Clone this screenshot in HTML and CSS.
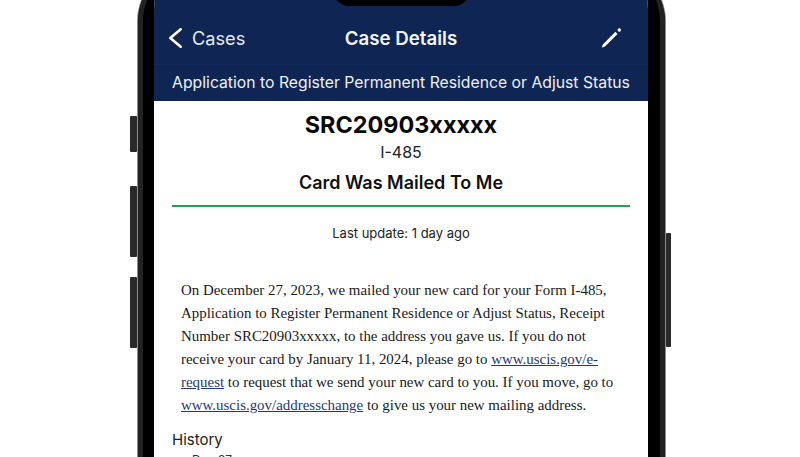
FILE: index.html
```html
<!DOCTYPE html>
<html lang="en">
<head>
<meta charset="utf-8">
<title>Case Details</title>
<link rel="stylesheet" href="styles.css">
</head>
<body>
<div class="phone">
  <span class="btn btn-silent"></span>
  <span class="btn btn-up"></span>
  <span class="btn btn-down"></span>
  <span class="btn btn-power"></span>
  <div class="bezel">
    <div class="screen">
      <span class="island"></span>
      <header class="head">
        <div class="nav">
          <div class="back">
            <svg class="chev" viewBox="0 0 16 24"><path d="M12.700 3.300 2.300 12 12.700 20.700"/></svg>
            <span>Cases</span>
          </div>
          <div class="title">Case Details</div>
          <svg class="pen" viewBox="0 0 22 22"><path class="p1" d="M1 20.500C1 18.800 1.700 17.500 2.800 16.400L14.400 4.800 16.500 6.900 5 18.500C3.900 19.600 2.700 20.400 1 20.500Z"/><circle class="p1" cx="18.300" cy="3" r="1.700"/></svg>
        </div>
        <div class="form-name">Application to Register Permanent Residence or Adjust Status</div>
      </header>
      <main class="body">
        <h1 class="receipt">SRC20903xxxxx</h1>
        <div class="form">I-485</div>
        <h2 class="status">Card Was Mailed To Me</h2>
        <div class="update">Last update: 1 day ago</div>
        <p class="desc">On December 27, 2023, we mailed your new card for your Form I-485,<br>Application to Register Permanent Residence or Adjust Status, Receipt<br>Number SRC20903xxxxx, to the address you gave us. If you do not<br>receive your card by January 11, 2024, please go to <a href="#">www.uscis.gov/e-<br>request</a> to request that we send your new card to you. If you move, go to<br><a href="#">www.uscis.gov/addresschange</a> to give us your new mailing address.</p>
        <div class="history">History</div>
        <div class="hist-item">Dec 27</div>
      </main>
    </div>
  </div>
</div>
</body>
</html>
```

FILE: styles.css
```css
html, body { margin: 0; padding: 0; height: 457px; overflow: hidden; background: #fff; }
body { font-family: "Inter", "Liberation Sans", sans-serif; color: #111; }

.phone {
  position: relative;
  box-sizing: border-box;
  width: 529px;
  height: 546px;
  margin: -40px 0 0 137px;
  padding: 1px;
  border-radius: 62px 62px 0 0;
  background: #8a8a8a;
}
.bezel {
  box-sizing: border-box;
  height: 100%;
  padding: 0 17px 0 16px;
  border-radius: 61px 61px 0 0;
  background: #000;
  box-shadow: inset 5px 0 0 #222, inset -5px 0 0 #222;
}
.screen {
  position: relative;
  height: 100%;
  overflow: hidden;
  border-radius: 48px 48px 0 0;
  background: #fff;
}
.island {
  position: absolute;
  top: 0;
  left: 179px;
  width: 137px;
  height: 45px;
  border-radius: 16px;
  background: #000;
}
.btn { position: absolute; width: 7px; background: #2a2a2a; border-radius: 1px; }
.btn-silent { left: -7px; top: 156px; height: 36px; }
.btn-up { left: -7px; top: 226px; height: 71px; }
.btn-down { left: -7px; top: 317px; height: 71px; }
.btn-power { right: -5px; top: 273px; width: 5px; height: 114px; }

.head { background: #0f2553; color: #fff; }
.nav {
  display: grid;
  grid-template-columns: 1fr auto 1fr;
  align-items: center;
  box-sizing: border-box;
  height: 103px;
  padding: 51px 14px 0;
}
.back { display: flex; align-items: center; gap: 8px; font-size: 18.200px; color: #e8ebf2; }
.chev { width: 16px; height: 24px; fill: none; stroke: #fff; stroke-width: 2.600; stroke-linecap: round; stroke-linejoin: round; }
.title { font-size: 18.700px; font-weight: 600; color: #f2f4f8; }
.pen { justify-self: end; width: 22px; height: 22px; margin-right: 11px; }
.p1 { fill: #fff; }
.form-name {
  height: 36px;
  line-height: 36px;
  text-align: center;
  font-size: 15.750px;
  color: #eef0f5;
  border-top: 1px solid #132a5c;
}

.body { padding: 0 18px; }
.receipt { margin: 9px 0 0; text-align: center; font-size: 23.400px; line-height: 29px; font-weight: 700; color: #0a0a0a; }
.form { margin-top: 4px; text-align: center; font-size: 16px; line-height: 18px; color: #222; }
.status { margin: 11px 0 0; padding-bottom: 11px; text-align: center; font-size: 18px; line-height: 22px; font-weight: 600; border-bottom: 2px solid #1fa450; color: #111; }
.update { margin-top: 18px; text-align: center; font-size: 13px; line-height: 16px; color: #222; }
.desc { margin: 38px 0 0 9px; font-family: "Liberation Serif", serif; font-size: 14.930px; line-height: 23.100px; color: #1a1a1a; white-space: nowrap; }
.desc a { color: #1f3a73; text-decoration: underline; }
.history { margin-top: 13px; font-size: 15px; line-height: 18px; color: #222; }
.hist-item { margin: 3px 0 0 20px; font-size: 12px; line-height: 15px; color: #333; }
```
